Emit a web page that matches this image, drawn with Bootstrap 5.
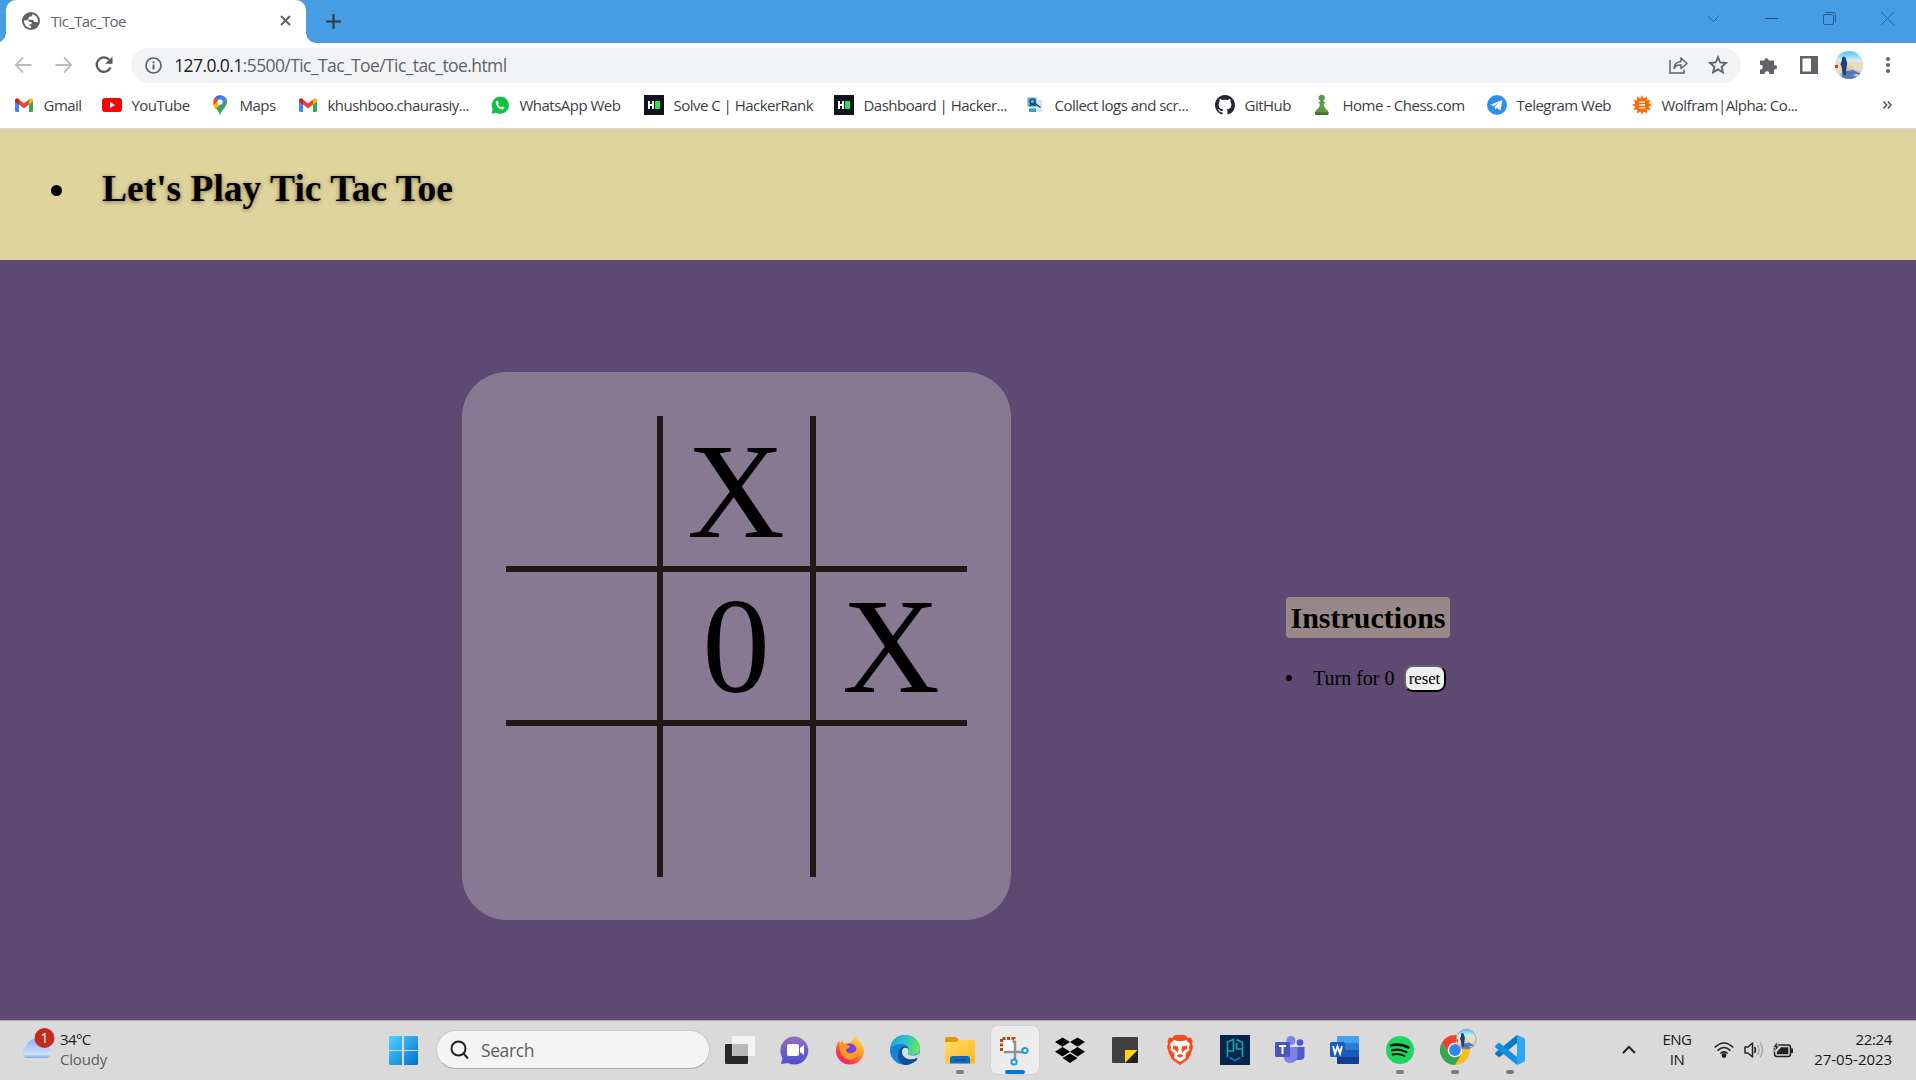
<!DOCTYPE html>
<html lang="en">
<head>
<meta charset="utf-8">
<title>Tic_Tac_Toe</title>
<link rel="stylesheet" href="https://cdn.jsdelivr.net/npm/bootstrap@5.3.0/dist/css/bootstrap.min.css">
<style>
body{font-family:"Open Sans","Noto Sans",sans-serif;font-size:15px;line-height:20px;color:#3c4043;overflow:hidden;height:1080px;background:#5e4973}
svg{display:block;flex:none;overflow:visible}
/* browser window */
.tabstrip{height:43px;background:#479de3;padding-left:6px}
.tab-active{width:300px;height:43px;background:#fff;border-radius:10px 10px 0 0;padding:0 15px 2px 16px;position:relative}
.tab-active::before,.tab-active::after{content:"";position:absolute;bottom:0;width:10px;height:10px}
.tab-active::before{left:-10px;background:radial-gradient(circle at 0 0,transparent 9.5px,#fff 10px)}
.tab-active::after{right:-10px;background:radial-gradient(circle at 100% 0,transparent 9.5px,#fff 10px)}
.tab-name{margin-left:11px;color:#5f6368;letter-spacing:-.65px}
.newtab{margin-left:20px;margin-bottom:1px}
.wctl{width:58px}
.wctls{padding-bottom:6px}
.toolbar{height:44px;background:#fff;padding:0 20px 0 13px}
.tool{width:40.4px}
.omni{height:35px;width:1610px;border-radius:18px;background:#f1f3f4;padding:0 13px 0 14px;margin-left:-3px}
.url{font-size:17.5px;color:#5f6368;margin-left:12px;letter-spacing:-.59px;line-height:24px}
.url b{font-weight:400;color:#202124}
.avatar-cell{margin-left:17px}
.marks{height:42px;background:#fff;padding:0 24px 5px 14px;border-bottom:1px solid #d3d8de}
.bm{gap:9.5px;white-space:nowrap;letter-spacing:-.52px;flex:none}
.bm svg{width:20px;height:20px}
.w88{width:88px}.w98{width:98px}.w108{width:108px}.w145{width:145px}.w154{width:154px}.w174{width:174px}.w190{width:190px}.w191{width:191px}.w192{width:192px}
/* game page */
.game{font-family:"Liberation Serif","Times New Roman",serif;color:#000}
.banner{height:131px;background:#dfd49d;padding:0 0 11px 51px}
.banner h1{font-size:37.5px;font-weight:700;line-height:46px;margin:0 0 0 39px;text-shadow:0 1px 4px rgba(80,60,20,.65)}
.dot-lg{width:11px;height:11px;border-radius:50%;background:#000;margin:2px 1px 0 0}
.arena{height:760px;background:#5e4973;padding:112px 0 0 462px}
.board{width:549px;height:548px;border-radius:45px;background:#887992;padding:44px}
.cells{display:grid;grid-template-columns:157px 153px 151px;grid-template-rows:156px 154px 151px}
.cell{font-size:135.500px;line-height:155px;display:flex;align-items:center;justify-content:center;border:0 solid #231815;padding:0 1px 0 0;overflow:hidden}
.cell:not(:nth-child(3n)){border-right-width:6px}
.cell:nth-child(-n+6){border-bottom-width:6px}
.panel{margin:225px 0 0 275px}
.panel h2{font-size:30px;font-weight:700;line-height:41px;height:41px;width:164px;background:#988887;border-radius:4px;margin:0 0 27px;text-align:center}
.turn{font-size:20px;line-height:25px;height:27px;padding-bottom:1px}
.dot-sm{width:6px;height:6px;border-radius:50%;background:#000;margin-right:21px}
.reset{font-family:inherit;font-size:16.67px;line-height:19px;width:42px;height:27px;padding:0;border:2.5px outset #111;border-radius:9px;background:#efefef;color:#000;margin-left:9px}
/* taskbar */
.taskbar{height:60px;background:#dadada;border-top:1px solid #b3adb5;color:#1b1b1b;padding:0 24px 2px 0;font-size:15px}
.weather{width:384px;padding:0 0 2px 20px;gap:8px}
.weather svg{margin-bottom:11px}
.weather .muted-t{color:#5d5d5d;letter-spacing:-.2px}
.win{width:52px}
.searchbox{width:274px;height:39px;border-radius:20px;background:#f4f4f4;border:1px solid #c9c9c9;border-bottom-color:#aaa;padding-left:12.5px;font-size:17.500px;letter-spacing:-.4px;color:#5c5c5c;gap:12.5px}
.apps{margin-left:2px}
.app{width:55px;height:59px;position:relative}
.app svg{width:30px;height:30px}
.app.run::after,.app.live::after{content:"";position:absolute;left:24px;bottom:5px;width:8px;height:4px;border-radius:2px;background:#7c7c7c}
.app.live::after{left:18px;width:20px;background:#0078d4}
.tile{width:48px;height:48px;border-radius:6px;background:#ececec;box-shadow:0 0 1px #999}
.lang{width:50px;text-align:center;letter-spacing:-.5px;padding-bottom:1px}
.clock{text-align:right;width:90px;padding-bottom:2px}
</style>
</head>
<body>
<svg width="0" height="0" class="position-absolute">
<defs>
<linearGradient id="gWin" x1="0" y1="0" x2="1" y2="1"><stop offset="0" stop-color="#4fd3ff"/><stop offset="1" stop-color="#0070d0"/></linearGradient>
<linearGradient id="gChat" x1="0" y1="0" x2="0" y2="1"><stop offset="0" stop-color="#9a6fb5"/><stop offset=".5" stop-color="#6a61c8"/><stop offset="1" stop-color="#4f50cc"/></linearGradient>
<linearGradient id="gFox" x1=".9" y1="0" x2=".2" y2="1"><stop offset="0" stop-color="#fff044"/><stop offset=".45" stop-color="#ff9527"/><stop offset=".75" stop-color="#ff3f48"/><stop offset="1" stop-color="#e61587"/></linearGradient>
<linearGradient id="gEdge" x1="0" y1=".2" x2="1" y2=".4"><stop offset="0" stop-color="#1b9de2"/><stop offset=".5" stop-color="#2cc3c9"/><stop offset="1" stop-color="#6be35a"/></linearGradient>
<linearGradient id="gFold" x1="0" y1="0" x2="1" y2="1"><stop offset="0" stop-color="#ffdc6b"/><stop offset="1" stop-color="#ffb817"/></linearGradient>
<linearGradient id="gCloud" x1="0" y1="0" x2="0" y2="1"><stop offset="0" stop-color="#8fb2ef"/><stop offset=".8" stop-color="#cfe0fa"/><stop offset="1" stop-color="#7ea6ea"/></linearGradient>
<linearGradient id="gPhoto" x1="0" y1="0" x2="0" y2="1"><stop offset="0" stop-color="#4cc4f2"/><stop offset=".35" stop-color="#d7eef0"/><stop offset=".5" stop-color="#e6d3ac"/><stop offset="1" stop-color="#a9b4c9"/></linearGradient>
<clipPath id="cPhoto"><circle cx="14" cy="14" r="14"/></clipPath>
<symbol id="gmail" viewBox="0 0 20 20"><path fill="#4285f4" d="M1 5v10.5Q1 17 2.500 17H5V9L1 6z"/><path fill="#34a853" d="M15 17h2.500q1.500 0 1.500-1.500V5l-4 4z"/><path fill="#ea4335" d="M5 4.500l5 3.900 5-3.900v5L10 13.400 5 9.500z"/><path fill="#c5221f" d="M1 5.400C1 3 3.500 2.700 5 4v5.700L1 6.600z"/><path fill="#fbbc04" d="M19 5.400C19 3 16.500 2.700 15 4v5.700l4-3.100z"/></symbol>
<symbol id="photo" viewBox="0 0 28 28"><g clip-path="url(#cPhoto)"><rect width="28" height="28" fill="url(#gPhoto)"/><path fill="#f0dcb4" d="M0 12l6-2v12L3 25H0z"/><path fill="#4f78bd" d="M4 28l8-8 6-1 8 4v5z"/><path fill="#e9dcc0" d="M13 10l15 1v11l-9-4z"/><path fill="#d9d6d0" d="M17 24l6-1v3z"/><path fill="#c33a35" d="M0 14h3v3H0z"/><path fill="#1c427c" d="M7 9q-.5-3 1.500-3.500T11 8l1.200 4-.7 5-.5 7H7.500L7 17l-1.500-4z"/></g></symbol>
</defs>
</svg>

<header class="tabstrip d-flex align-items-center">
  <div class="tab-active d-flex align-items-center">
    <svg width="18" height="18" viewBox="0 0 18 18"><circle cx="9" cy="9" r="9" fill="#5f6368"/><path fill="#fff" d="M2 8.200h3.200q2 .2 2.200 1.800h2.200v2.200H7.500v1.600H9v2.200A7 7 0 0 1 2 8.200zM10.500 2.200q-.2 2.500-2.200 2.600H6.800v1.500L5 7.800h5.500q1.500.3 1.500 2.300 2.200-.3 4 .2.500-3-1.300-5.500-1.600-2-4.200-2.600z"/></svg>
    <span class="tab-name">Tic_Tac_Toe</span>
    <svg class="ms-auto" width="11" height="11" viewBox="0 0 11 11"><path d="M1 1l9 9M10 1l-9 9" stroke="#5f6368" stroke-width="2"/></svg>
  </div>
  <svg class="newtab" width="15" height="15" viewBox="0 0 15 15"><path d="M7.500 0v15M0 7.500h15" stroke="#333b44" stroke-width="2.200"/></svg>
  <div class="wctls d-flex align-items-center ms-auto">
    <div class="wctl d-flex justify-content-center"><svg width="13" height="13" fill="none" stroke="#2d6797"><path d="M.5 3.500l6 6 6-6"/></svg></div>
    <div class="wctl d-flex justify-content-center"><svg width="13" height="13" stroke="#2d4f70"><path d="M0 6.500h13"/></svg></div>
    <div class="wctl d-flex justify-content-center"><svg width="13" height="13" fill="none" stroke="#2d5f8b"><rect x=".5" y="2.500" width="10" height="10" rx="1.500"/><path d="M2.500.5H10Q12.500.5 12.500 3v7.500"/></svg></div>
    <div class="wctl d-flex justify-content-center"><svg width="13" height="13" stroke="#2d5f8b"><path d="M0 0l13 13M13 0L0 13"/></svg></div>
  </div>
</header>

<nav class="toolbar d-flex align-items-center">
  <div class="tool"><svg width="20" height="20" viewBox="0 0 20 20" fill="none" stroke="#babcbe" stroke-width="1.800"><path d="M18.500 10H3M10 2.500L2.700 10l7.300 7.500"/></svg></div>
  <div class="tool"><svg width="20" height="20" viewBox="0 0 20 20" fill="none" stroke="#babcbe" stroke-width="1.800"><path d="M2.500 10H18M11 2.500l7.300 7.500-7.300 7.500"/></svg></div>
  <div class="tool"><svg width="20" height="20" viewBox="0 0 20 20"><path d="M16.500 12.500a7.200 7.200 0 1 1-1.300-7.700" fill="none" stroke="#54585d" stroke-width="2.200"/><path d="M18.500 1.500v7.300h-7.300z" fill="#54585d"/></svg></div>
  <div class="omni d-flex align-items-center">
    <svg width="17" height="17" viewBox="0 0 17 17"><circle cx="8.500" cy="8.500" r="7.500" fill="none" stroke="#5f6368" stroke-width="1.700"/><path d="M8.500 7.500v5M8.500 4.300v1.900" stroke="#5f6368" stroke-width="1.900"/></svg>
    <span class="url"><b>127.0.0.1</b>:5500/Tic_Tac_Toe/Tic_tac_toe.html</span>
    <svg class="ms-auto" width="19" height="18" viewBox="0 0 19 18" fill="none" stroke="#5f6368" stroke-width="1.500"><path d="M1 4v13h14v-3.500"/><path d="M5 12.500q.5-6.500 7-7V2l6 5.500-6 5V9q-5-.5-7 3.500z" stroke-linejoin="round"/></svg>
    <svg style="margin-left:20px" width="20" height="20" viewBox="0 0 20 20"><path d="M10 2.200l2.200 5.300 5.800.5-4.400 3.800 1.300 5.600-4.900-3-4.900 3 1.300-5.600L2 8l5.800-.5z" fill="none" stroke="#5f6368" stroke-width="1.800"/></svg>
  </div>
  <svg style="margin-left:18px" width="19" height="19" viewBox="0 0 19 19"><path fill="#5f6368" d="M1 4.500h4.300a2.200 2.200 0 1 1 4.400 0H15v4.700h1a2.100 2.100 0 1 1 0 4.300h-1V18h-4.600q0-2.700-2.400-2.700T5.600 18H1v-4.400q2.700 0 2.700-2.400T1 8.800z"/></svg>
  <svg class="ms-auto" width="18" height="18"><path fill="#5f6368" fill-rule="evenodd" d="M0 0h18v18H0zM2.500 2.500v13H11v-13z"/></svg>
  <svg class="avatar-cell" width="28" height="28"><use href="#photo"/></svg>
  <svg style="margin-left:23px;margin-right:6px" width="4" height="16" fill="#5f6368"><circle cx="2" cy="2" r="2"/><circle cx="2" cy="8" r="2"/><circle cx="2" cy="14" r="2"/></svg>
</nav>

<nav class="marks d-flex align-items-center">
  <div class="bm w88 d-flex align-items-center"><svg><use href="#gmail"/></svg>Gmail</div>
  <div class="bm w108 d-flex align-items-center"><svg viewBox="0 0 20 20"><rect y="3" width="20" height="14" rx="3" fill="#f00"/><path d="M8 7l5 3-5 3z" fill="#fff"/></svg>YouTube</div>
  <div class="bm w88 d-flex align-items-center"><svg viewBox="0 0 20 20"><path fill="#34a853" d="M4 10.500C5.500 14 8.500 15 9.300 19q.4 1.500 1.200 0C11.500 15 17 12 17 6.500q0-1.500-.5-2.500z"/><path fill="#4285f4" d="M11.500.3q4 1 5.200 4.200L9 13.500 6.500 10z"/><path fill="#fbbc04" d="M3.300 8.500L7.300 4l3 6-5 4Q3.300 12 3.300 8.500z"/><path fill="#1a73e8" d="M5 2.300Q8-.7 12 .5L8.500 5z"/><path fill="#ea4335" d="M5 2.300L8.500 5 4 10Q2.200 5.500 5 2.300z"/><circle cx="10" cy="7" r="2.600" fill="#fff"/></svg>Maps</div>
  <div class="bm w192 d-flex align-items-center"><svg><use href="#gmail"/></svg>khushboo.chaurasiy...</div>
  <div class="bm w154 d-flex align-items-center"><svg viewBox="0 0 20 20"><path fill="#0fc143" d="M1.500 19l1.200-4.700A8.600 8.600 0 1 1 6 17.700z"/><path fill="#fff" d="M7 5.500q-1.500.8-1.200 2.700c1 3.500 3 5.500 6.500 6.200q1.800 0 2.200-2l-2.300-1.200-1.200 1.200Q9 11.700 8 9.500l.8-1.300-.9-2.300z"/></svg>WhatsApp Web</div>
  <div class="bm w190 d-flex align-items-center"><svg viewBox="0 0 20 20"><path fill="#0e141e" d="M0 0h20v20H0z"/><path fill="#fff" d="M4 6h2v3h2V6h2v8H8v-3H6v3H4z"/><path fill="#1ee662" d="M11 6h5v8h-5z"/></svg>Solve C | HackerRank</div>
  <div class="bm w191 d-flex align-items-center"><svg viewBox="0 0 20 20"><path fill="#0e141e" d="M0 0h20v20H0z"/><path fill="#fff" d="M4 6h2v3h2V6h2v8H8v-3H6v3H4z"/><path fill="#1ee662" d="M11 6h5v8h-5z"/></svg>Dashboard | Hacker...</div>
  <div class="bm w190 d-flex align-items-center"><svg viewBox="0 0 20 20"><path fill="#cfe6f6" d="M5 5h12v12H5z"/><path fill="#55abe2" d="M2.500 2.500h9v9h-9z"/><circle cx="7.500" cy="6.500" r="2.500" fill="none" stroke="#12345a" stroke-width="1.200"/><path d="M4.500 11q3-3 6 0M10 8.500l5.500 4" stroke="#12345a" stroke-width="1.200" fill="none"/><path fill="#3a9ad9" d="M4 13.500h7V17H4z"/></svg>Collect logs and scr...</div>
  <div class="bm w98 d-flex align-items-center"><svg viewBox="0 0 16 16"><path fill="#24292f" d="M8 0C3.580 0 0 3.580 0 8c0 3.540 2.290 6.530 5.470 7.590.4.070.55-.17.55-.38 0-.19-.01-.82-.01-1.490-2.010.37-2.530-.49-2.690-.94-.09-.23-.48-.94-.82-1.130-.28-.15-.68-.52-.01-.53.63-.01 1.080.58 1.230.82.72 1.210 1.870.87 2.330.66.070-.52.28-.87.51-1.070-1.780-.2-3.640-.89-3.640-3.950 0-.87.31-1.590.82-2.150-.08-.2-.36-1.020.08-2.120 0 0 .67-.21 2.200.82.640-.18 1.320-.27 2-.27s1.360.090 2 .27c1.530-1.040 2.200-.82 2.200-.82.440 1.100.160 1.920.080 2.120.510.560.820 1.270.820 2.150 0 3.070-1.870 3.750-3.650 3.950.290.250.540.730.540 1.480 0 1.070-.01 1.930-.01 2.200 0 .210.150.460.550.380A8.010 8.010 0 0 0 16 8c0-4.420-3.580-8-8-8z"/></svg>GitHub</div>
  <div class="bm w174 d-flex align-items-center"><svg viewBox="0 0 20 20"><path fill="#5d9948" d="M2 19q-.5-3 2-4.500Q7 12 7 8.500H5.500v-1l2-1.500A3.200 3.200 0 1 1 10 6l2.200 1.500v1h-1.700q0 3.500 3 6 2.500 1.500 2 4.500z"/><path fill="#3a7029" d="M2 17.500h13.500q.2 2.500-1 2.500H3q-1.200 0-1-2.500z"/></svg>Home - Chess.com</div>
  <div class="bm w145 d-flex align-items-center"><svg viewBox="0 0 20 20"><circle cx="10" cy="10" r="10" fill="#2f8fed"/><path fill="#fff" d="M3.500 9.800L15.500 5l-2 10.500-3.500-2.600-1.800 1.700-.5-3.200 5.300-4.300-6.500 3.900z"/></svg>Telegram Web</div>
  <div class="bm d-flex align-items-center"><svg viewBox="0 0 20 20"><path fill="#ff6a00" d="M10 0l1.600 3.600L15 1.600l-.2 3.800 3.900-.4-2 3.300L20 10l-3.300 1.700 2 3.300-3.900-.4.200 3.800-3.400-2L10 20l-1.600-3.600-3.400 2 .2-3.800-3.900.4 2-3.300L0 10l3.300-1.700-2-3.300 3.900.4L5 1.600l3.400 2z"/><path d="M7 7.200h6M7 10h6M7 12.800h6" stroke="#fff" stroke-width="1.300"/></svg>Wolfram|Alpha: Co...</div>
  <svg class="ms-auto" width="9" height="9" fill="none" stroke="#50545a" stroke-width="1.500"><path d="M.5.5l3.200 3.500L.5 7.500M4.800.5L8 4 4.800 7.500"/></svg>
</nav>

<main class="game">
  <div class="banner d-flex align-items-center"><span class="dot-lg"></span><h1>Let's Play Tic Tac Toe</h1></div>
  <section class="arena d-flex align-items-start">
    <div class="board"><div class="cells">
      <div class="cell"></div><div class="cell">X</div><div class="cell"></div>
      <div class="cell"></div><div class="cell">0</div><div class="cell">X</div>
      <div class="cell"></div><div class="cell"></div><div class="cell"></div>
    </div></div>
    <div class="panel">
      <h2>Instructions</h2>
      <div class="turn d-flex align-items-center"><span class="dot-sm"></span><span>Turn for 0</span><button class="reset">reset</button></div>
    </div>
  </section>
</main>

<footer class="taskbar d-flex align-items-center">
  <div class="weather d-flex align-items-center">
    <svg width="32" height="32" viewBox="0 0 32 32"><path fill="url(#gCloud)" d="M7 31a6 6 0 0 1-1-11.500Q8 12 15.500 12q6 0 8 6.500Q31 18 31 25q0 6-6 6z"/><circle cx="24.500" cy="11" r="10" fill="#c42b1c"/><text x="24.500" y="16" font-size="14" fill="#fff" text-anchor="middle">1</text></svg>
    <div><div style="letter-spacing:-.6px">34°C</div><div class="muted-t">Cloudy</div></div>
  </div>
  <div class="win ps-1"><svg width="30" height="30" viewBox="0 0 30 30" fill="url(#gWin)"><path d="M2 1h12v14H1V2zM16 1h13l1 1v13H16zM1 16h13v14H2l-1-1zM16 16h14v13l-1 1H16z"/></svg></div>
  <div class="searchbox d-flex align-items-center"><svg width="19" height="20" viewBox="0 0 19 20" fill="none" stroke="#222" stroke-width="2"><circle cx="8.500" cy="8.500" r="7"/><path d="M13.500 13.500l4.500 5"/></svg>Search</div>
  <div class="apps d-flex">
    <div class="app d-flex align-items-center justify-content-center"><svg viewBox="0 0 30 30"><rect y="9" width="23" height="20" rx="1" fill="#292929"/><rect x="7" y="1" width="23" height="20" rx="1" fill="#f6f6f6" opacity=".9"/><path fill="#b9b9b9" d="M7.500 9H23v12H7.500z"/></svg></div>
    <div class="app d-flex align-items-center justify-content-center"><svg viewBox="0 0 30 30"><path fill="url(#gChat)" d="M1 29l1.500-6A14 14 0 1 1 8 28z"/><rect x="7" y="9" width="12" height="12" rx="2" fill="#fff"/><path fill="#fff" d="M20 13l4-3v10l-4-3z"/></svg></div>
    <div class="app d-flex align-items-center justify-content-center"><svg viewBox="0 0 30 30"><path fill="url(#gFox)" d="M1 16Q1 10 4 6l1 3 2-3.500L9 9q4-2 6-1 3-3 5-8 1 4 5 7 4 4 4 9a14 13.500 0 0 1-28 0z"/><circle cx="15" cy="15" r="6.500" fill="#7a3fe0"/><path fill="#ff9a24" d="M4 9q5-2 8 1l3 1q0 2-4 3 0 5 6 4 4-1 5-5 2 11-7 12Q5 24 4 9z"/></svg></div>
    <div class="app d-flex align-items-center justify-content-center"><svg viewBox="0 0 30 30"><circle cx="15" cy="15" r="15" fill="#1483d8"/><path fill="url(#gEdge)" d="M0 14C1 5 7 0 15 0c9 0 15 6 15 13 0 5-4 7-8 7-3 0-5-1-5-2 4-3 1-9-5-9-5 0-10 2-12 5z"/><path fill="#0f4f96" d="M11 16q-2 9 7 11 5 1 9-3-5 6-12 6Q8 28 8 20q0-5 4-8 3-2 6 1-4 0-5 3 0 9 9 8 4 0 5-1 1 1-1 3-5 3-10 1-5-3-5-8z"/><path fill="#d8dfe3" d="M30 15q-1 6-7.500 5.500-6-.5-4.700-2.500 1.500-2 0-4.500Q13 11 12 16q-.3 6 6 8 5 1.200 9-1.500L28 24z"/></svg></div>
    <div class="app run d-flex align-items-center justify-content-center"><svg viewBox="0 0 30 30"><path fill="#dd9b0c" d="M0 4q0-2 2-2h8q2 0 3 2l1 2v3H0z"/><path fill="url(#gFold)" d="M0 7h11l3-2h16v23.500H0z"/><path fill="#0f6cbd" d="M5 28.500V24q0-3 3-3h14q3 0 3 3v4.500z"/><path d="M9 25h12" stroke="#0a3f75"/></svg></div>
    <div class="app live d-flex align-items-center justify-content-center"><div class="tile d-flex align-items-center justify-content-center"><svg viewBox="0 0 30 30"><rect x="0" y="2" width="15" height="14" fill="#fff"/><path d="M1.500 16V3.500h12.500v4" fill="none" stroke="#d83b01" stroke-width="3" stroke-dasharray="3 1.500"/><path d="M15 6v18M4 17h19" stroke="#8b9298" stroke-width="2.500"/><g fill="#fff" stroke="#1d9be2" stroke-width="2"><circle cx="25" cy="15.500" r="2.600"/><circle cx="14" cy="27" r="2.600"/></g></svg></div></div>
    <div class="app d-flex align-items-center justify-content-center"><svg viewBox="0 0 30 30"><path d="M7.500 2.500L15 7l-7.500 4.800L0 7zM22.500 2.500L30 7l-7.500 4.800L15 7zM7.500 12l7.500 4.700-7.500 4.700L0 16.700zM22.500 12l7.500 4.700-7.500 4.700-7.500-4.700zM15 18.500l7.500 4.600L15 28l-7.500-4.900z"/></svg></div>
    <div class="app d-flex align-items-center justify-content-center"><svg viewBox="0 0 30 30"><path fill="#3f3f3f" d="M2 3q0-1 1-1h24q1 0 1 1v13L16 28H3q-1 0-1-1z"/><path fill="#222" d="M15 28L28 15v12q0 1-1 1z"/><path fill="#ffd60a" d="M15 15h12.500L15 28z"/></svg></div>
    <div class="app d-flex align-items-center justify-content-center"><svg viewBox="0 0 30 30"><path fill="#fb4b1e" d="M10 0h10l3 3 3-.5 1.500 4-.5 2.500 1 3q-1.500 7-5 12.500L15 30l-8-5.500Q3.500 19 2 12l1-3-.5-2.500L4 2.500 7 3z"/><path fill="#fff" d="M9 5l3 1h6l3-1 4 4-1 3 .5 3-4 3.500.5 4.500-6 4-6-4 .5-4.500-4-3.500.5-3-1-3z"/><path fill="#fb4b1e" d="M8 10.500l5 1 .5 3.500-.8 3-1.700-2.500-3-1.500zM22 10.500l-5 1-.5 3.500.8 3 1.700-2.500 3-1.500zM11.500 20.500l3.500-1.500 3.500 1.500-3.500 2.500z"/></svg></div>
    <div class="app d-flex align-items-center justify-content-center"><svg viewBox="0 0 30 30"><path fill="#05244c" d="M0 0h30v30H0z"/><g fill="none" stroke-width="1.700"><path d="M7.500 22V7L13.500 4.500V16H8M16.500 4.500l6 3V22M22 14h-5.500V8" stroke="#14a3aa"/><path d="M9.500 22.500l5.500 3 5.500-3" stroke="#1478c8"/></g></svg></div>
    <div class="app d-flex align-items-center justify-content-center"><svg viewBox="0 0 30 30"><circle cx="16" cy="5.500" r="4.500" fill="#7b83eb"/><circle cx="25" cy="7.500" r="3.300" fill="#5059c9"/><path fill="#5059c9" d="M20 12h9.500v9q0 4-4.500 4h-5z"/><path fill="#7b83eb" d="M9 12h13.500v9q-.5 7-7 7T9 22z"/><rect y="7" width="15" height="15" rx="1.500" fill="#4b53bc"/><path d="M4 11h7M7.500 11v8" stroke="#fff" stroke-width="2"/></svg></div>
    <div class="app d-flex align-items-center justify-content-center"><svg viewBox="0 0 30 30"><path fill="#41a5ee" d="M7 2q0-1 1-1h20q1 0 1 1v6H7z"/><path fill="#2b7cd3" d="M7 8h22v7H7z"/><path fill="#185abd" d="M7 15h22v7H7z"/><path fill="#103f91" d="M7 22h22v6q0 1-1 1H8q-1 0-1-1z"/><rect y="7" width="15" height="15" rx="1.500" fill="#185abd"/><path d="M3 11l2 7.500 2.500-7 2.500 7 2-7.500" fill="none" stroke="#fff" stroke-width="1.900"/></svg></div>
    <div class="app run d-flex align-items-center justify-content-center"><svg viewBox="0 0 30 30"><circle cx="15" cy="15" r="14" fill="#1ed760"/><g fill="none" stroke="#111" stroke-linecap="round"><path d="M6 10.500q9-2.500 17.500 2" stroke-width="2.600"/><path d="M7 15.300q7.500-2 14.500 1.800" stroke-width="2.200"/><path d="M7.500 19.500q6.500-1.500 12 1.500" stroke-width="1.900"/></g></svg></div>
    <div class="app run d-flex align-items-center justify-content-center"><svg viewBox="0 0 30 30"><circle cx="15" cy="15" r="15" fill="#fbc116"/><path fill="#ea4335" d="M2 7.500A15 15 0 0 1 28 7.500H15L8.500 18.700z"/><path fill="#34a853" d="M2 7.500l6.500 11.300 13 0L15 30A15 15 0 0 1 2 7.500z"/><circle cx="15" cy="15" r="7.300" fill="#fff"/><circle cx="15" cy="15" r="5.900" fill="#3b82f0"/><g transform="translate(16 -6) scale(.73)"><use href="#photo" width="28" height="28"/><circle cx="14" cy="14" r="13.500" fill="none" stroke="#8b9aa3"/></g></svg></div>
    <div class="app run d-flex align-items-center justify-content-center"><svg viewBox="0 0 30 30"><path fill="#0a78c8" d="M22 0v8L4 22.500l-3.500-3q-.7-1 0-2z"/><path fill="#1490df" d="M22 30v-8L4 7.500.5 10.500q-.7 1 0 2z"/><path fill="#2da7f3" d="M22 0l7 3q1 .5 1 2v20q0 1.500-1 2l-7 3V7z"/></svg></div>
  </div>
  <svg style="margin-left:85px" width="14" height="9" fill="none" stroke="#222" stroke-width="2"><path d="M1 8l6-6 6 6"/></svg>
  <div class="lang" style="margin-left:16px"><div>ENG</div><div>IN</div></div>
  <svg style="margin-left:12px" width="20" height="16" viewBox="0 0 20 16" fill="none" stroke="#222" stroke-width="1.600"><path d="M.7 5.500q9.300-9 18.600 0M3.500 8.600q6.500-6.200 13 0M6.300 11.500q3.700-3.300 7.400 0"/><circle cx="10" cy="13.500" r="1.600" fill="#222"/></svg>
  <svg style="margin-left:10px" width="20" height="18" viewBox="0 0 20 18" fill="none" stroke="#222" stroke-width="1.500"><path d="M1 6v6h3l4.500 4V2L4 6z" stroke-linejoin="round"/><path d="M10.500 6q2 3 0 6"/><path d="M13.500 4q3 5 0 10M16 1.500q5 7.500 0 15" stroke="#a9a9a9"/></svg>
  <svg style="margin-left:9px" width="21" height="18" viewBox="0 0 21 18"><rect x="1.500" y="4" width="16" height="11.500" rx="2.500" fill="none" stroke="#222" stroke-width="1.500"/><path fill="#222" d="M3.800 13.300V11L8 6.200h7.300v7.100zM18 7.500h2v4.500h-2z"/><path fill="#222" stroke="#dadada" stroke-width=".8" d="M4.500 0L0 6.500h2.500L1.500 11l5-6H4z"/></svg>
  <div class="clock ms-auto"><div style="letter-spacing:-.35px">22:24</div><div style="letter-spacing:-.05px">27-05-2023</div></div>
</footer>
<script src="https://cdn.jsdelivr.net/npm/bootstrap@5.3.0/dist/js/bootstrap.bundle.min.js"></script>
</body>
</html>
